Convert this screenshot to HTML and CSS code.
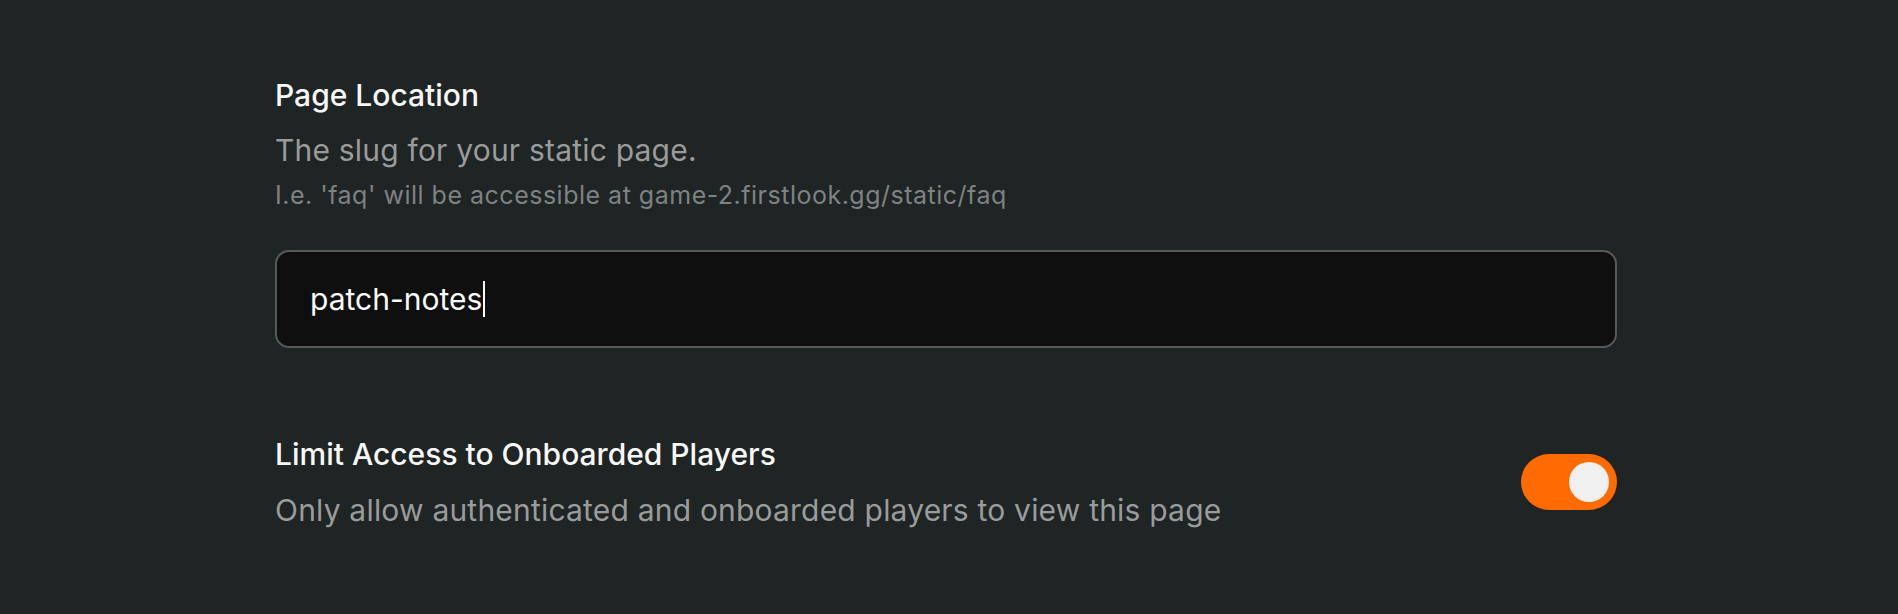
FILE: index.html
```html
<!DOCTYPE html>
<html lang="en">
<head>
<meta charset="utf-8">
<title>Page settings</title>
<link rel="stylesheet" href="styles.css">
</head>
<body>
<main class="settings">
  <section class="field">
    <h2 class="field-title">Page Location</h2>
    <p class="field-desc">The slug for your static page.</p>
    <p class="field-hint">I.e. 'faq' will be accessible at game-2.firstlook.gg/static/faq</p>
    <div class="text-input"><span class="input-value">patch-notes</span><span class="caret"></span></div>
  </section>
  <section class="toggle-row">
    <div class="toggle-text">
      <h2 class="field-title">Limit Access to Onboarded Players</h2>
      <p class="field-desc toggle-desc">Only allow authenticated and onboarded players to view this page</p>
    </div>
    <div class="switch switch-on"><span class="knob"></span></div>
  </section>
</main>
</body>
</html>
```

FILE: styles.css
```css
* { box-sizing: border-box; }
html, body {
  margin: 0;
  padding: 0;
  background: #1f2424;
}
body {
  font-family: "Inter", "Liberation Sans", sans-serif;
  color: #f5f5f5;
  height: 614px;
  overflow: hidden;
}
.settings {
  width: 1342px;
  margin-left: 275px;
  padding-top: 77px;
}
.field-title {
  margin: 0;
  font-size: 30px;
  line-height: 36px;
  font-weight: 500;
  color: #f7f7f7;
}
.field-desc {
  margin: 19px 0 0;
  font-size: 30px;
  line-height: 36px;
  font-weight: 400;
  color: #9a9c9c;
  letter-spacing: 0.2px;
}
.field-hint {
  margin: 12px 0 0;
  font-size: 25px;
  line-height: 30px;
  color: #7e8282;
  letter-spacing: 0.5px;
}
.text-input {
  margin-top: 40px;
  height: 98px;
  border: 2px solid #585a5a;
  border-radius: 14px;
  background: #0f0f0f;
  padding-left: 33px;
  display: flex;
  align-items: center;
  font-size: 30px;
  color: #fafafa;
}
.caret {
  display: inline-block;
  width: 2px;
  height: 36px;
  background: #fafafa;
  margin-left: 1px;
}
.toggle-row {
  margin-top: 88px;
  display: flex;
  align-items: center;
  justify-content: space-between;
}
.toggle-desc { margin-top: 20px; }
.switch {
  width: 96px;
  height: 56px;
  border-radius: 28px;
  background: #3a3f3f;
  display: flex;
  align-items: center;
  padding: 0 8px;
  flex-shrink: 0;
}
.switch-on {
  background: #ff6b00;
  justify-content: flex-end;
}
.knob {
  width: 40px;
  height: 40px;
  border-radius: 50%;
  background: #f0f0f0;
}
```
